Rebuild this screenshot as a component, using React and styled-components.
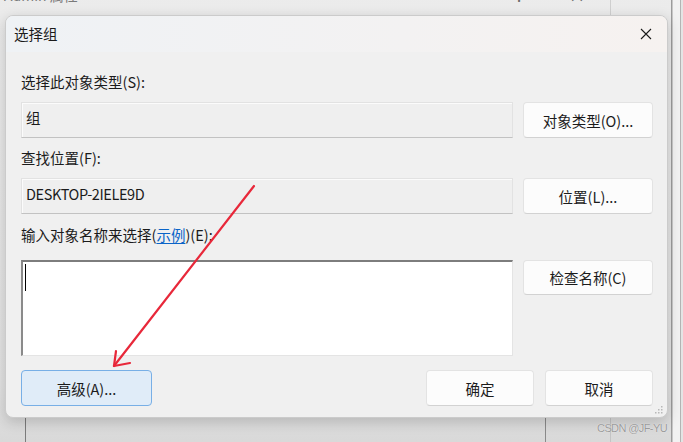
import styled, { createGlobalStyle } from 'styled-components'

const GlobalStyle = createGlobalStyle`
	html, body {
		margin: 0;
		padding: 0;
	}
	body {
		font-family: "Noto Sans CJK SC", "Noto Sans", sans-serif;
		color: #1b1b1b;
	}
`

function CloseIcon() {
	return (
		<svg width="12" height="12" viewBox="0 0 12 12">
			<path d="M1 1 L11 11 M11 1 L1 11" stroke="#1b1b1b" strokeWidth="1.1" fill="none" />
		</svg>
	)
}

function ResizeGrip() {
	return (
		<Grip>
			<svg width="8" height="8" viewBox="0 0 8 8">
				<g fill="#b8b8b8">
					<rect x="6" y="0" width="1.5" height="1.5" />
					<rect x="3" y="3" width="1.5" height="1.5" />
					<rect x="6" y="3" width="1.5" height="1.5" />
					<rect x="0" y="6" width="1.5" height="1.5" />
					<rect x="3" y="6" width="1.5" height="1.5" />
					<rect x="6" y="6" width="1.5" height="1.5" />
				</g>
			</svg>
		</Grip>
	)
}

function Arrow() {
	// 截图上的红色标注箭头
	return (
		<Overlay width="683" height="442" viewBox="0 0 683 442">
			<g stroke="#e8283a" strokeWidth="2.2" strokeLinecap="round" fill="none">
				<path d="M254 186 L114 366" />
				<path d="M114 366 L116 351" />
				<path d="M114 366 L130 363" />
			</g>
		</Overlay>
	)
}

function App() {
	return (
		<Desktop>
			<GlobalStyle />
			<BackWindow>
				<BackTitle>
					<span>Admin 属性</span>
					<BackControls>
						<span>?</span>
						<BackClose>×</BackClose>
					</BackControls>
				</BackTitle>
				<BackFooter>
					<BackLine $left={25} $color="#7c7c7c" />
					<BackLine $left={545} $color="#8a8a8a" />
					<BackLine $left={610} $color="#c4c4c4" />
				</BackFooter>
			</BackWindow>

			<Dialog>
				<TitleBar>
					<Title>选择组</Title>
					<CloseButton>
						<CloseIcon />
					</CloseButton>
				</TitleBar>

				<Body>
					<Label $top={20}>选择此对象类型(S):</Label>
					<Row>
						<Field>组</Field>
						<Button>对象类型(O)...</Button>
					</Row>

					<Label $top={10}>查找位置(F):</Label>
					<Row>
						<Field $latin>DESKTOP-2IELE9D</Field>
						<Button>位置(L)...</Button>
					</Row>

					<Label $top={11}>
						输入对象名称来选择(<Link>示例</Link>)(E):
					</Label>
					<Row $gap={15}>
						<TextBox>
							<Caret />
						</TextBox>
						<Button $short>检查名称(C)</Button>
					</Row>

					<Footer>
						<Button $primary $width={131}>
							高级(A)...
						</Button>
						<FooterRight>
							<Button $width={108}>确定</Button>
							<Button $width={108}>取消</Button>
						</FooterRight>
					</Footer>
				</Body>
				<ResizeGrip />
			</Dialog>

			<Watermark>CSDN @JF-YU</Watermark>
			<Arrow />
		</Desktop>
	)
}
export default App

const Desktop = styled.div`
	position: relative;
	width: 683px;
	height: 442px;
	overflow: hidden;
	background: #e4e4e4;
`

const BackWindow = styled.div`
	position: absolute;
	left: -10px;
	top: -25px;
	width: 681px;
	height: 483px;
	background: linear-gradient(#ececec, #e2e2e2 85%, #d6d6d6);
	border-right: 1px solid #9c9c9c;
	box-shadow: 6px 0 0 -5px #c8c8c8, 8px 0 0 #f2f2f2, 9px 0 0 #b4b4b4;
`

const BackTitle = styled.div`
	height: 40px;
	display: flex;
	align-items: center;
	justify-content: space-between;
	padding: 0 0 0 14px;
	font-size: 14px;
	color: #7a7a7a;
`

const BackControls = styled.div`
	display: flex;
	height: 100%;
	align-items: center;
	gap: 46px;
	padding-right: 60px;
	font-size: 16px;
	color: #6a6a6a;
`

const BackClose = styled.span`
	height: 100%;
	display: flex;
	align-items: center;
	padding-right: 25px;
	border-right: 1px solid #cfcfcf;
`

const BackFooter = styled.div`
	position: absolute;
	left: 10px;
	right: 0;
	bottom: 0;
	height: 62px;
`

const BackLine = styled.div`
	position: absolute;
	left: ${p => p.$left}px;
	top: 0;
	bottom: 0;
	width: 1px;
	background: ${p => p.$color};
`

const Dialog = styled.div`
	position: absolute;
	left: 5px;
	top: 15px;
	width: 663px;
	height: 403px;
	box-sizing: border-box;
	background: #f0f0f0;
	border: 1px solid #cbcbcb;
	border-radius: 8px;
	box-shadow: 0 4px 14px rgba(0, 0, 0, 0.18);
	display: flex;
	flex-direction: column;
	overflow: hidden;
`

const TitleBar = styled.div`
	height: 36px;
	flex: none;
	display: flex;
	align-items: center;
	justify-content: space-between;
	padding: 0 14px 0 8px;
	background: linear-gradient(90deg, #eff2f5, #f3f2f2 60%, #f6f2f0);
`

const Title = styled.div`
	font-size: 14.5px;
	line-height: 20px;
	color: #1b1b1b;
`

const CloseButton = styled.div`
	width: 14px;
	height: 14px;
	display: flex;
	align-items: center;
	justify-content: center;
`

const Body = styled.div`
	flex: 1;
	display: flex;
	flex-direction: column;
	padding: 0 14px 0 15px;
`

const Label = styled.div`
	margin-top: ${p => p.$top}px;
	margin-bottom: 10px;
	font-size: 14.5px;
	line-height: 20px;
	color: #1b1b1b;
	white-space: nowrap;
`

const Link = styled.span`
	color: #0a64c8;
	text-decoration: underline;
	text-underline-offset: 2px;
`

const Row = styled.div`
	display: grid;
	grid-template-columns: 492px 130px;
	column-gap: 10px;
	align-items: start;
	margin-top: ${p => (p.$gap ? p.$gap - 10 : 0)}px;
`

const Field = styled.div`
	height: 36px;
	box-sizing: border-box;
	padding: 5px 4px 0;
	font-size: 14.5px;
	line-height: 20px;
	letter-spacing: ${p => (p.$latin ? '-0.4px' : '0')};
	background: #efefef;
	border: 1px solid #e2e2e2;
	border-bottom-color: #c2c2c2;
	box-shadow: inset 1px 1px 0 #fbfbfb;
`

const TextBox = styled.div`
	height: 96px;
	box-sizing: border-box;
	background: #ffffff;
	border: 1px solid #e4e4e4;
	border-top: 2px solid #7d7d7d;
	border-left: 2px solid #8a8a8a;
	padding: 2px 0 0 2px;
`

const Caret = styled.div`
	width: 1px;
	height: 27px;
	background: #000000;
`

const Button = styled.div`
	height: ${p => (p.$short ? 35 : 36)}px;
	width: ${p => (p.$width ? `${p.$width}px` : 'auto')};
	box-sizing: border-box;
	display: flex;
	align-items: center;
	justify-content: center;
	font-size: 14.5px;
	color: #1b1b1b;
	background: ${p => (p.$primary ? '#e0ecf8' : '#fcfcfc')};
	border: 1px solid ${p => (p.$primary ? '#78afe6' : '#e3e3e3')};
	border-bottom-color: ${p => (p.$primary ? '#78afe6' : '#d2d2d2')};
	border-radius: 4px;
`

const Footer = styled.div`
	margin-top: 14px;
	display: flex;
	justify-content: space-between;
	align-items: center;
`

const FooterRight = styled.div`
	display: flex;
	gap: 11px;
`

const Grip = styled.div`
	position: absolute;
	right: 4px;
	bottom: 3px;
	line-height: 0;
`

const Watermark = styled.div`
	position: absolute;
	right: 16px;
	bottom: 8px;
	font-family: "Liberation Sans", Arial, sans-serif;
	font-size: 11px;
	color: #9a9a9a;
	text-shadow: 0 0 1px #ffffff;
	letter-spacing: -0.6px;
`

const Overlay = styled.svg`
	position: absolute;
	left: 0;
	top: 0;
	pointer-events: none;
`
